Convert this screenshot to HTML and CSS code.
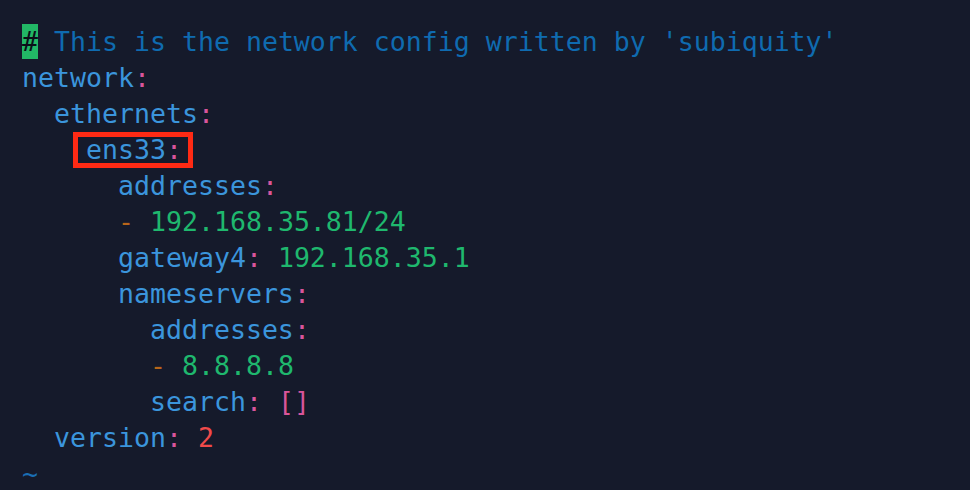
FILE: index.html
```html
<!DOCTYPE html>
<html>
<head>
<meta charset="utf-8">
<link rel="stylesheet" href="styles.css">
</head>
<body>
<pre class="editor"><span class="line"><span class="cursor">#</span><span class="cm"> This is the network config written by 'subiquity'</span></span><span class="line"><span class="k">network</span><span class="p">:</span></span><span class="line">  <span class="k">ethernets</span><span class="p">:</span></span><span class="line">    <span class="mark"><span class="k">ens33</span><span class="p">:</span></span></span><span class="line">      <span class="k">addresses</span><span class="p">:</span></span><span class="line">      <span class="d">-</span> <span class="s">192.168.35.81/24</span></span><span class="line">      <span class="k">gateway4</span><span class="p">:</span> <span class="s">192.168.35.1</span></span><span class="line">      <span class="k">nameservers</span><span class="p">:</span></span><span class="line">        <span class="k">addresses</span><span class="p">:</span></span><span class="line">        <span class="d">-</span> <span class="s">8.8.8.8</span></span><span class="line">        <span class="k">search</span><span class="p">:</span> <span class="p">[]</span></span><span class="line">  <span class="k">version</span><span class="p">:</span> <span class="n">2</span></span><span class="line"><span class="t">~</span></span></pre>
</body>
</html>
```
FILE: styles.css
```css
html, body {
  margin: 0;
  padding: 0;
  background: #151a2b;
  height: 100%;
  overflow: hidden;
}
.editor {
  margin: 0;
  padding: 24px 0 0 22px;
  font-family: "DejaVu Sans Mono", monospace;
  font-size: 26.57px;
  line-height: 36px;
  color: #3b95dc;
}
.line {
  display: block;
  height: 36px;
}
.cursor {
  display: inline-block;
  vertical-align: top;
  width: 16px;
  height: 35px;
  background: #22b866;
  color: #0b0f18;
}
.cm { color: #0f6bb0; }
.k { color: #3b95dc; }
.p { color: #d9559a; }
.s { color: #1fb86e; }
.d { color: #b8661a; }
.n { color: #f04a4a; }
.t { color: #1a6fb5; }
.mark {
  position: relative;
}
.mark::after {
  content: "";
  position: absolute;
  left: -13px;
  right: -11px;
  top: -2px;
  bottom: -3px;
  border: 5px solid #ff2a14;
}
```
